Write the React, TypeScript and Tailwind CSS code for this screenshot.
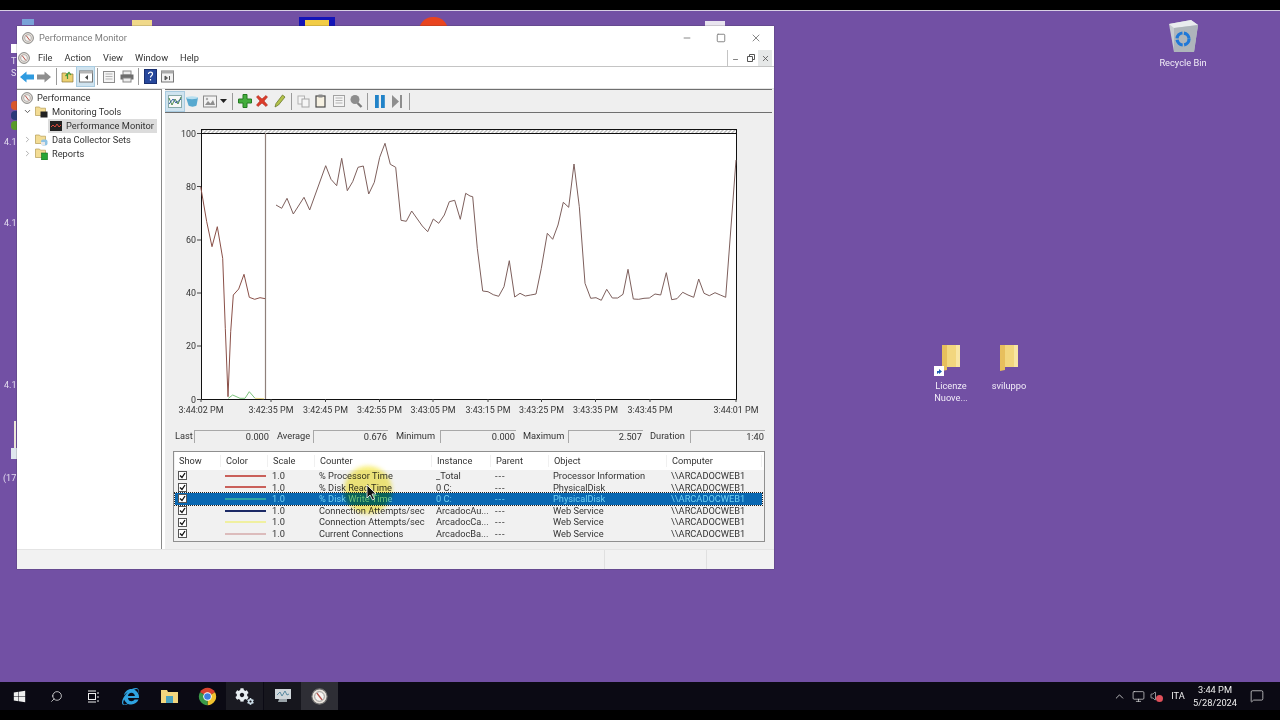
import { Search, ChevronRight, ChevronDown, ChevronUp, Minus, Square, X, MessageSquare, Monitor, Volume } from 'lucide-react';
import { FaCog, FaInternetExplorer, FaWindows } from 'react-icons/fa';

const z7 = [[62,185],[80,290],[96,365],[112,305],[128,400],[136,610],[144,815],[152,620],[160,510],[176,492],[192,448],[208,517],[224,523],[240,518],[256,521]];
const z7b = [[288,240],[305,250],[321,220],[340,267],[372,217],[389,255],[437,122],[453,163],[470,182],[485,100],[502,197],[518,170],[534,127],[550,123],[566,207],[583,172],[599,97],[615,55],[631,118],[647,127],[663,286],[679,289],[695,258],[727,303],[743,320],[760,282],[776,295],[793,270],[808,230],[824,226],[841,283],[857,205]];
const z8 = [[0,213],[8,215],[22,370],[38,498],[54,500],[70,509],[86,514],[102,485],[118,407],[134,516],[150,505],[166,513],[182,510],[198,507],[214,430],[232,325],[248,343],[264,300],[280,232],[296,247],[312,117],[328,245],[345,475],[362,520],[378,518],[394,526],[410,493],[427,519],[443,519],[459,508],[474,433],[490,522],[506,523],[522,520],[538,519],[555,507],[572,510],[589,443],[605,524],[621,521],[638,502],[654,510],[671,517],[686,462],[702,505],[718,512],[735,503],[751,510],[767,517],[798,105]];

const toPage = (pts: number[][], ox: number) => pts.map(([x, y]) => `${(ox + x / 3).toFixed(1)},${(125 + y / 3).toFixed(1)}`).join(' ');
const trace = toPage(z7b, 180) + ' ' + toPage(z8, 470);

const yLabels = [[100, 133], [80, 186], [60, 239.5], [40, 292.5], [20, 345.5], [0, 399]];
const xLabels = [['3:44:02 PM', 201], ['3:42:35 PM', 271], ['3:42:45 PM', 325.5], ['3:42:55 PM', 379.5], ['3:43:05 PM', 433], ['3:43:15 PM', 488], ['3:43:25 PM', 541.5], ['3:43:35 PM', 595.5], ['3:43:45 PM', 650], ['3:44:01 PM', 736]] as const;

const stats = [
  { label: 'Last', value: '0.000', lw: 'w-[19px]', bw: 'w-[76px]', gap: 'mr-[7px]' },
  { label: 'Average', value: '0.676', lw: 'w-[36px]', bw: 'w-[75px]', gap: 'mr-[8px]' },
  { label: 'Minimum', value: '0.000', lw: 'w-[44px]', bw: 'w-[76px]', gap: 'mr-[7px]' },
  { label: 'Maximum', value: '2.507', lw: 'w-[45px]', bw: 'w-[75px]', gap: 'mr-[7px]' },
  { label: 'Duration', value: '1:40', lw: 'w-[40px]', bw: 'w-[75px]', gap: '' },
];

const rows = [
  { color: 'bg-[#c9605a]', counter: '% Processor Time', instance: '_Total', object: 'Processor Information' },
  { color: 'bg-[#c9605a]', counter: '% Disk Read Time', instance: '0 C:', object: 'PhysicalDisk' },
  { color: 'bg-[#2fa3a3]', counter: '% Disk Write Time', instance: '0 C:', object: 'PhysicalDisk', selected: true },
  { color: 'bg-[#1c2a66]', counter: 'Connection Attempts/sec', instance: 'ArcadocAu...', object: 'Web Service' },
  { color: 'bg-[#f0f0a0]', counter: 'Connection Attempts/sec', instance: 'ArcadocCa...', object: 'Web Service' },
  { color: 'bg-[#dcbcbc]', counter: 'Current Connections', instance: 'ArcadocBa...', object: 'Web Service' },
];

const columns = 'grid w-[587px] grid-cols-[46px_47px_47px_117px_59px_58px_118px_95px]';

function PerfIcon({ size = 12 }: { size?: number }) {
  return (
    <svg width={size} height={size} viewBox="0 0 12 12" className="shrink-0">
      <circle cx="6" cy="6" r="5.4" fill="#e9e3dc" stroke="#6a6a6a" strokeWidth="0.8" />
      <circle cx="6" cy="6" r="3.4" fill="#f6f4f1" stroke="#8a8a8a" strokeWidth="0.6" />
      <path d="M4.2 3.6 7.800 8.400" stroke="#b5524a" strokeWidth="1" />
    </svg>
  );
}

function TreeFolder({ badge }: { badge: string }) {
  return (
    <svg width="13" height="13" viewBox="0 0 13 13" className="shrink-0">
      <path d="M.5 2h4l1 1.2h5v7.3H.5z" fill="#f3dc94" stroke="#b59c55" strokeWidth=".7" />
      {badge === 'term' && <rect x="5.5" y="6.5" width="7" height="6" fill="#222" />}
      {badge === 'data' && <><rect x="6" y="6.5" width="6.5" height="6" rx="2" fill="#8fc3e4" /><rect x="6" y="9" width="4" height="3" fill="#e7e7e7" /></>}
      {badge === 'report' && <rect x="6.5" y="6" width="6" height="7" fill="#27a536" stroke="#14691f" strokeWidth=".6" />}
    </svg>
  );
}

function Tool({ active, children }: { active?: boolean; children: React.ReactNode }) {
  return (
    <div className={`flex h-[19px] w-[17.600px] shrink-0 items-center justify-center ${active ? 'bg-[#cfe3ef] outline outline-[#a9cbe0]' : ''}`}>
      {children}
    </div>
  );
}

const Sep = () => <div className="mx-[2.500px] h-[17px] w-px shrink-0 bg-[#9a9a9a]" />;

const Page = ({ stroke = '#8c8c8c' }: { stroke?: string }) => (
  <svg width="14" height="14" viewBox="0 0 14 14">
    <rect x="1.5" y="1.5" width="11" height="11" fill="#f4f4f4" stroke={stroke} />
    <path d="M3.5 4h7M3.5 6.5h7M3.5 9h7" stroke="#b4b4b4" />
  </svg>
);

function TopToolbar() {
  return (
    <div className="flex h-[22px] shrink-0 items-center border-b border-[#e4e4e4] bg-white pb-[2px] pl-[1px]">
      <Tool>
        <svg width="14" height="12" viewBox="0 0 14 12"><path d="M0 6 6.5.5v3H14v5H6.500v3z" fill="#2f9be0" /></svg>
      </Tool>
      <Tool>
        <svg width="14" height="12" viewBox="0 0 14 12"><path d="M14 6 7.500.5v3H0v5h7.500v3z" fill="#8e8e8e" /></svg>
      </Tool>
      <Sep />
      <Tool>
        <svg width="13" height="13" viewBox="0 0 13 13"><path d="M1 3h4l1 1h6v8H1z" fill="#ecd071" stroke="#8f7a3a" strokeWidth=".7" /><path d="M6.500 9V4M4.500 6 8 2.500 10 5" stroke="#3f9a3a" fill="none" strokeWidth="1.200" /></svg>
      </Tool>
      <Tool active>
        <svg width="14" height="13" viewBox="0 0 14 13"><rect x=".5" y="1" width="13" height="11" fill="#fff" stroke="#747474" /><rect x=".5" y="1" width="13" height="2.500" fill="#b5b5b5" /><path d="M9 5v5L6 7.500z" fill="#444" /></svg>
      </Tool>
      <Sep />
      <Tool><Page /></Tool>
      <Tool>
        <svg width="14" height="13" viewBox="0 0 14 13"><rect x="3" y="1" width="8" height="4" fill="#ededed" stroke="#888" /><rect x=".5" y="4.500" width="13" height="5" fill="#6d6d6d" /><rect x="3" y="8" width="8" height="4" fill="#ededed" stroke="#888" /></svg>
      </Tool>
      <Sep />
      <Tool>
        <svg width="13" height="15" viewBox="0 0 13 15"><rect x=".5" y=".5" width="12" height="14" fill="#27489c" stroke="#1a2f70" /><path d="M4.500 5c0-2.500 4-2.500 4 0 0 1.500-2 1.500-2 3.500M6.500 10v1.500" stroke="#fff" fill="none" strokeWidth="1.200" /></svg>
      </Tool>
      <Tool>
        <svg width="13" height="13" viewBox="0 0 13 13"><rect x=".5" y="1" width="12" height="11" fill="#f2f2f2" stroke="#777" /><rect x=".5" y="1" width="12" height="2.500" fill="#a9a9a9" /><path d="M4 6v4l2.500-2zM8.500 6v4" stroke="#555" fill="#555" /></svg>
      </Tool>
    </div>
  );
}

function ChartToolbar() {
  return (
    <div className="mr-[2px] flex h-[24px] shrink-0 items-center border-y border-[#6f6f6f] bg-[#efefef] pl-[1px]">
      <Tool active>
        <svg width="14" height="13" viewBox="0 0 14 13"><rect x=".5" y=".5" width="13" height="12" fill="#f8f8f8" stroke="#8aa" /><path d="M1 3l3 7 3-6 3 5 3-7" stroke="#4d8a4d" fill="none" /><path d="M1 9l4-5 3 4 5-4" stroke="#3a62a8" fill="none" /></svg>
      </Tool>
      <Tool>
        <svg width="14" height="13" viewBox="0 0 14 13"><path d="M1 2.500h12l-1.500 8c-2 1.500-6 1.500-8 0z" fill="#58a9cf" /><ellipse cx="7" cy="2.700" rx="6" ry="1.500" fill="#b7dff0" /></svg>
      </Tool>
      <div className="flex items-center">
        <Tool>
          <svg width="14" height="13" viewBox="0 0 14 13"><rect x=".5" y="1" width="13" height="11" fill="#f2f2f2" stroke="#8a8a8a" /><path d="M2 10l3-4 2.500 2.500L10 5l2 5z" fill="#8f8f8f" /><circle cx="4" cy="4" r="1.200" fill="#aaa" /></svg>
        </Tool>
        <svg width="7" height="4" viewBox="0 0 7 4" className="ml-[1px]"><path d="M0 0h7L3.500 4z" fill="#222" /></svg>
      </div>
      <div className="ml-[3px]"><Sep /></div>
      <Tool>
        <svg width="14" height="14" viewBox="0 0 14 14"><path d="M5 .5h4V5h4.500v4H9v4.500H5V9H.5V5H5z" fill="#44ad3d" stroke="#247a22" /></svg>
      </Tool>
      <Tool>
        <svg width="14" height="14" viewBox="0 0 14 14"><path d="M1.500 3 3 1.500l4 3.500 4-3.500L12.500 3 9 7l3.500 4-1.500 1.500L7 9l-4 3.500L1.500 11 5 7z" fill="#dc3c2a" stroke="#ad2c20" strokeWidth=".6" /></svg>
      </Tool>
      <Tool>
        <svg width="13" height="14" viewBox="0 0 13 14"><path d="M2 13 3 9.500 9.500 1 12 3 5.500 11z" fill="#b3c24a" stroke="#6b7a2d" strokeWidth=".8" /></svg>
      </Tool>
      <Sep />
      <Tool>
        <svg width="13" height="13" viewBox="0 0 13 13"><rect x="1" y="1" width="6.500" height="8" fill="#f5f5f5" stroke="#b2b2b2" /><rect x="5" y="4" width="7" height="8" fill="#f5f5f5" stroke="#a5a5a5" /></svg>
      </Tool>
      <Tool>
        <svg width="13" height="14" viewBox="0 0 13 14"><rect x="2" y="2" width="9" height="11" fill="#f6f1e2" stroke="#4a4a4a" strokeWidth="1.200" /><rect x="4.500" y=".5" width="4" height="3" fill="#8a8a8a" /></svg>
      </Tool>
      <Tool><Page stroke="#a2a2a2" /></Tool>
      <Tool>
        <svg width="14" height="14" viewBox="0 0 14 14"><circle cx="6" cy="5.500" r="4.500" fill="#8d8d8d" /><path d="M8.500 9l4 4" stroke="#7c7c7c" strokeWidth="2.400" /></svg>
      </Tool>
      <Sep />
      <Tool>
        <svg width="12" height="13" viewBox="0 0 12 13"><rect x="1" y="0" width="3.800" height="13" fill="#2183c8" /><rect x="7" y="0" width="3.800" height="13" fill="#2183c8" /></svg>
      </Tool>
      <Tool>
        <svg width="12" height="13" viewBox="0 0 12 13"><path d="M1 0l7 6.500L1 13z" fill="#8e8e8e" /><rect x="9" y="0" width="2" height="13" fill="#8e8e8e" /></svg>
      </Tool>
      <Sep />
    </div>
  );
}

function Chart() {
  return (
    <svg viewBox="165 113 607 315" width="607" height="315" className="block shrink-0">
      <defs>
        <pattern id="hatch" width="4" height="4" patternUnits="userSpaceOnUse" patternTransform="skewX(-45)">
          <rect width="4" height="4" fill="#fff" />
          <path d="M1 0v4" stroke="#777" />
        </pattern>
      </defs>
      <rect x="201" y="129" width="536" height="270" fill="#fff" />
      <rect x="201" y="129.500" width="536" height="4" fill="url(#hatch)" />
      <path d="M201 129.500h536M201 133.500h536M736.500 129v270M201 399.500h536M201.500 129v270" stroke="#111" fill="none" />
      {yLabels.map(([v, y]) => (
        <g key={v}>
          <path d={`M197 ${y + 0.5}h4`} stroke="#444" />
          <text x="196" y={y + 3.500} textAnchor="end" fontSize="8.900" fill="#333" fontFamily="Roboto, sans-serif">{v}</text>
        </g>
      ))}
      {xLabels.map(([t, x]) => (
        <g key={t}>
          <path d={`M${x} 399v3`} stroke="#444" />
          <text x={x} y="413" textAnchor="middle" fontSize="8.900" fill="#333" fontFamily="Roboto, sans-serif">{t}</text>
        </g>
      ))}
      <polyline points={toPage([[145, 820], [158, 810], [180, 820], [195, 820], [208, 800], [225, 820]], 180)} fill="none" stroke="#7cc47c" />
      <polyline points={toPage([[225, 820], [252, 821]], 180)} fill="none" stroke="#e8d98a" />
      <polyline points={toPage(z7, 180)} fill="none" stroke="#8a5048" />
      <polyline points={trace} fill="none" stroke="#7d5f5c" />
      <path d="M265.500 133v266" stroke="#8f807b" strokeWidth="1.200" />
    </svg>
  );
}

function Stats() {
  return (
    <div className="flex h-[16px] shrink-0 items-center pl-[10px] text-[9.250px] text-[#333]">
      {stats.map((s) => (
        <div key={s.label} className={`flex items-center ${s.gap}`}>
          <span className={`whitespace-nowrap ${s.lw}`}>{s.label}</span>
          <div className={`flex h-[13px] items-center justify-end border-t border-l border-[#a8a8a8] pr-[1px] ${s.bw}`}>{s.value}</div>
        </div>
      ))}
    </div>
  );
}

function CounterTable() {
  return (
    <div className="mt-[7px] ml-[8px] h-[91px] w-[592px] shrink-0 border border-[#8f8f8f] bg-[#f1f1f1] pl-[1px] text-[9.250px] leading-[11.500px] text-[#333]">
      <div className="h-[18px] bg-white">
        <div className={`${columns} h-[18px] items-center`}>
          {['Show', 'Color', 'Scale', 'Counter', 'Instance', 'Parent', 'Object', 'Computer'].map((h) => (
            <div key={h} className={`border-r border-[#f0f0f0] ${h === 'Show' ? 'pl-[4px]' : 'pl-[5px]'}`}>{h}</div>
          ))}
        </div>
      </div>
      {rows.map((r) => (
        <div key={r.counter + r.instance} className={`${columns} h-[11.600px] items-center whitespace-nowrap ${r.selected ? 'bg-[#0a68b2] text-[#6fd0f2] outline-1 outline-dotted outline-[#222]' : ''}`}>
          <div className="pl-[3px]">
            <div className="flex h-[9px] w-[9px] items-center justify-center border border-[#555] bg-white">
              <svg width="7" height="7" viewBox="0 0 7 7"><path d="M1 3.500 3 5.500 6 1" stroke="#111" strokeWidth="1.300" fill="none" /></svg>
            </div>
          </div>
          <div className={`ml-[4px] h-[2px] w-[41px] ${r.color}`} />
          <div className="pl-[4px]">1.0</div>
          <div className="pl-[4px]">{r.counter}</div>
          <div className="pl-[4px]">{r.instance}</div>
          <div className="pl-[4px] tracking-[1px]">---</div>
          <div className="pl-[4px]">{r.object}</div>
          <div className="pl-[4px]">\\ARCADOCWEB1</div>
        </div>
      ))}
    </div>
  );
}

function Tree() {
  return (
    <div className="w-[145px] shrink-0 border-t border-r border-[#8a8a8a] bg-white pt-[1px] text-[9.250px] text-[#333]">
      <div className="flex h-[13.900px] items-center gap-[4px] pl-[4px]"><PerfIcon />Performance</div>
      <div className="flex h-[13.900px] items-center pl-[6px]">
        <ChevronDown size={9} strokeWidth={2.500} className="mr-[3px] text-[#555]" />
        <TreeFolder badge="term" /><span className="ml-[4px]">Monitoring Tools</span>
      </div>
      <div className="flex h-[13.900px] items-center pl-[31px]">
        <div className="flex h-[14px] w-[109px] items-center gap-[4px] bg-[#dcdcdc] pl-[2px] whitespace-nowrap">
          <svg width="12" height="10" viewBox="0 0 12 10" className="shrink-0"><rect width="12" height="10" fill="#222" /><path d="M1 6l2-2 2 2 2-3 2 3 2-2" stroke="#d9483b" fill="none" /></svg>
          Performance Monitor
        </div>
      </div>
      <div className="flex h-[13.900px] items-center pl-[6px]">
        <ChevronRight size={9} strokeWidth={2} className="mr-[3px] text-[#999]" />
        <TreeFolder badge="data" /><span className="ml-[4px]">Data Collector Sets</span>
      </div>
      <div className="flex h-[13.900px] items-center pl-[6px]">
        <ChevronRight size={9} strokeWidth={2} className="mr-[3px] text-[#999]" />
        <TreeFolder badge="report" /><span className="ml-[4px]">Reports</span>
      </div>
    </div>
  );
}

function PerfWindow() {
  return (
    <div className="absolute top-[15px] left-[17px] flex h-[543px] w-[757px] flex-col bg-white text-[9.250px] shadow-[0_0_1px_#333]">
      <div className="flex h-[24px] shrink-0 items-center pl-[5px] text-[#7c7c7c]">
        <PerfIcon />
        <span className="ml-[5px]">Performance Monitor</span>
        <div className="ml-auto flex items-center gap-[24px] pr-[12px] text-[#888]">
          <Minus size={10} strokeWidth={1} absoluteStrokeWidth />
          <Square size={10} strokeWidth={1} absoluteStrokeWidth />
          <X size={12} strokeWidth={1} absoluteStrokeWidth />
        </div>
      </div>
      <div className="flex h-[17px] shrink-0 items-center border-b border-[#c4c4c4] pl-[1px] text-[#333]">
        <PerfIcon />
        <div className="ml-[8px] flex gap-[12px]">
          {['File', 'Action', 'View', 'Window', 'Help'].map((m) => <span key={m}>{m}</span>)}
        </div>
        <div className="mr-[2px] ml-auto flex h-[16px] items-center border-l border-[#c4c4c4] text-[#555]">
          <div className="flex w-[15px] justify-center pt-[3px]"><Minus size={7} strokeWidth={2.500} /></div>
          <div className="flex w-[15px] justify-center">
            <svg width="8" height="8" viewBox="0 0 8 8"><path d="M.5 2.500h5v5h-5zM2.500 2.500v-2h5v5h-2" fill="none" stroke="#555" /></svg>
          </div>
          <div className="flex h-[16px] w-[14px] items-center justify-center bg-[#e6e8e8]"><X size={9} strokeWidth={2.200} /></div>
        </div>
      </div>
      <TopToolbar />
      <div className="flex min-h-0 flex-1">
        <Tree />
        <div className="ml-[3px] flex flex-1 flex-col bg-[#efefef] text-[#333]">
          <ChartToolbar />
          <Chart />
          <Stats />
          <CounterTable />
        </div>
      </div>
      <div className="flex h-[20px] shrink-0 border-t border-[#e4e4e4] bg-[#f2f2f2]">
        <div className="w-[588px] border-r border-[#e0e0e0]" />
        <div className="w-[102px] border-r border-[#e0e0e0]" />
      </div>
    </div>
  );
}

function DeskFolder({ shortcut }: { shortcut?: boolean }) {
  return (
    <div className="relative h-[28px] w-[22px]">
      <svg width="22" height="28" viewBox="0 0 22 28">
        <path d="M2 1h18v22H6l-4 3z" fill="#f2d67e" />
        <path d="M2 1h5v25l-5 1z" fill="#e7bf5d" />
        <path d="M16 1h4v22h-4z" fill="#f8e5a3" />
      </svg>
      {shortcut && (
        <div className="absolute top-[22px] -left-[6px] flex h-[10px] w-[10px] items-center justify-center bg-white">
          <svg width="7" height="7" viewBox="0 0 7 7"><path d="M1 6V3h2V1l3 2.500L3 6V4.500z" fill="#1f5fb4" /></svg>
        </div>
      )}
    </div>
  );
}

function Desktop() {
  return (
    <div className="relative flex-1 bg-[#7250a4]">
      {/* icons half hidden behind the window */}
      <div className="absolute top-[8px] left-[22px] h-[6px] w-[12px] bg-[#7aa3d8]" />
      <div className="absolute top-[9px] left-[132px] h-[6px] w-[20px] bg-[#f0d98a]" />
      <div className="absolute top-[6px] left-[299px] flex h-[10px] w-[36px] justify-center bg-[#1414b8]">
        <div className="mt-[3px] h-[7px] w-[24px] bg-[#f2cc45]" />
      </div>
      <div className="absolute top-[6px] left-[419px] h-[28px] w-[29px] rounded-full bg-[#e9441f]" />
      <div className="absolute top-[10px] left-[705px] h-[5px] w-[20px] bg-[#e8e4ef]" />
      <div className="absolute top-[33px] left-[11px] h-[9px] w-[6px] bg-white" />
      <span className="absolute top-[45px] left-[11px] text-[9px] leading-[11px] text-[#e3dcef]">T</span>
      <span className="absolute top-[57px] left-[11px] text-[9px] leading-[11px] text-[#e3dcef]">S</span>
      <div className="absolute top-[90px] left-[11px] flex flex-col gap-[1px]">
        <div className="h-[9px] w-[6px] rounded-l-sm bg-[#d9582c]" />
        <div className="h-[9px] w-[6px] rounded-l-sm bg-[#2a3a7a]" />
        <div className="h-[9px] w-[6px] rounded-l-sm bg-[#5a9a2a]" />
      </div>
      <span className="absolute top-[126px] left-[4px] text-[9px] leading-[11px] text-[#e3dcef]">4.1</span>
      <span className="absolute top-[207px] left-[4px] text-[9px] leading-[11px] text-[#e3dcef]">4.1</span>
      <span className="absolute top-[369px] left-[4px] text-[9px] leading-[11px] text-[#e3dcef]">4.1</span>
      <span className="absolute top-[462px] left-[3px] w-[14px] overflow-hidden text-[9px] leading-[11px] whitespace-nowrap text-[#e3dcef]">(17</span>
      <div className="absolute top-[410px] left-[14px] h-[27px] w-[2px] bg-[#ece7d8]" />
      <div className="absolute top-[437px] left-[11px] h-[11px] w-[6px] bg-[#dfe6ee]" />

      <PerfWindow />

      <div className="absolute top-[8px] left-[1153px] flex w-[60px] flex-col items-center text-[9.250px] text-[#f2edf8]">
        <svg width="32" height="34" viewBox="0 0 32 34">
          <path d="M2 5 24 1l7 5-4 27H7z" fill="#c7ccd1" />
          <path d="M2 5 24 1l7 5-24 3z" fill="#e9ecee" />
          <path d="M7 9l24-3-4 27H7z" fill="#aeb5bb" />
          <circle cx="16" cy="20" r="6" fill="none" stroke="#1f78d8" strokeWidth="3.200" strokeDasharray="8 1.500" />
        </svg>
        <span className="mt-[3px]">Recycle Bin</span>
      </div>
      <div className="absolute top-[333px] left-[921px] flex w-[60px] flex-col items-center text-[9.250px] leading-[11.500px] text-[#f2edf8]">
        <DeskFolder shortcut />
        <span className="mt-[8px] text-center">Licenze<br />Nuove...</span>
      </div>
      <div className="absolute top-[333px] left-[979px] flex w-[60px] flex-col items-center text-[9.250px] leading-[11.500px] text-[#f2edf8]">
        <DeskFolder />
        <span className="mt-[8px] text-center">sviluppo</span>
      </div>
    </div>
  );
}

function Taskbar() {
  return (
    <div className="flex h-[28px] shrink-0 items-center bg-[#0b0a14] text-[#eee]">
      <div className="flex w-[38px] justify-center"><FaWindows size={13} /></div>
      <div className="flex w-[37px] justify-center"><Search size={13} strokeWidth={1.400} className="-scale-x-100" /></div>
      <div className="flex w-[36px] justify-center">
        <svg width="13" height="13" viewBox="0 0 13 13" fill="none" stroke="#eee"><rect x="1.500" y="3.500" width="7" height="6" /><path d="M1 1h8M1 12h8M11 2v2M11 6v2M11 10v2" /></svg>
      </div>
      <div className="flex w-[39px] justify-center">
        <FaInternetExplorer size={17} className="text-[#2fa3e0]" />
      </div>
      <div className="flex w-[38px] justify-center">
        <svg width="17" height="14" viewBox="0 0 17 14"><path d="M0 1h6l1 2h10v11H0z" fill="#f2d67e" /><rect x="5" y="7" width="7" height="7" fill="#4aa3c0" /></svg>
      </div>
      <div className="flex w-[38px] justify-center">
        <svg width="19" height="19" viewBox="0 0 24 24">
          <path d="M2.500 6.500A11 11 0 0 1 21.500 6.500L12 12z" fill="#d9432f" />
          <path d="M21.500 6.500A11 11 0 0 1 12 23L12 12z" fill="#f1c22f" />
          <path d="M12 23A11 11 0 0 1 2.500 6.500L12 12z" fill="#3a9a48" />
          <circle cx="12" cy="12" r="5.400" fill="#fff" />
          <circle cx="12" cy="12" r="4.200" fill="#3f7fe0" />
        </svg>
      </div>
      <div className="relative flex h-full w-[37px] items-center justify-center bg-[#1a1a22]">
        <FaCog size={14} className="-mt-[3px] -ml-[5px] text-[#e8eef2]" />
        <FaCog size={7} className="absolute top-[16px] left-[21px] text-[#cfe0ea]" />
      </div>
      <div className="ml-[1px] flex h-full w-[37px] items-center justify-center bg-[#16161d]">
        <svg width="18" height="16" viewBox="0 0 18 16"><rect x="1" y="1" width="16" height="10" fill="#cfd6da" /><path d="M3 7l3-3 2 4 3-5 2 4 2-1" stroke="#5a8aa0" fill="none" /><path d="M5 11h8v3H4z" fill="#9aa3a8" /></svg>
      </div>
      <div className="flex h-full w-[37px] items-center justify-center bg-[#2e2e35]"><PerfIcon size={17} /></div>
      <div className="ml-auto flex items-center">
        <ChevronUp size={13} strokeWidth={1.400} className="mr-[6px]" />
        <Monitor size={13} strokeWidth={1.200} className="mr-[5px]" />
        <div className="relative mr-[4px]">
          <Volume size={12} strokeWidth={1.200} />
          <div className="absolute top-[5px] left-[6px] h-[7px] w-[7px] rounded-full bg-[#e0505a]" />
        </div>
        <span className="w-[24px] text-center text-[9.250px]">ITA</span>
        <div className="flex w-[50px] flex-col items-center text-[9.250px] leading-[13px]">
          <span>3:44 PM</span>
          <span>5/28/2024</span>
        </div>
        <MessageSquare size={14} strokeWidth={1.200} className="mr-[16px] ml-[10px]" />
      </div>
    </div>
  );
}

export default function App() {
  return (
    <div className="relative flex h-[720px] w-[1280px] flex-col overflow-hidden bg-black font-['Roboto',sans-serif]">
      <div className="h-[11px] shrink-0 border-b border-[#d8d0e4] bg-black" />
      <Desktop />
      <Taskbar />
      <div className="h-[10px] shrink-0 bg-black" />
      {/* yellow pointer highlight from the screen recorder */}
      <div className="absolute top-[466px] left-[344px] h-[48px] w-[48px] rounded-full bg-[#f8ee70] opacity-90 mix-blend-multiply blur-[2px]" />
      <svg width="12" height="17" viewBox="0 0 12 17" className="absolute top-[484px] left-[366px]">
        <path d="M1 1v13l3-3 2.500 5 2-1-2.500-5H10z" fill="#111" stroke="#fff" strokeWidth=".8" />
      </svg>
    </div>
  );
}
